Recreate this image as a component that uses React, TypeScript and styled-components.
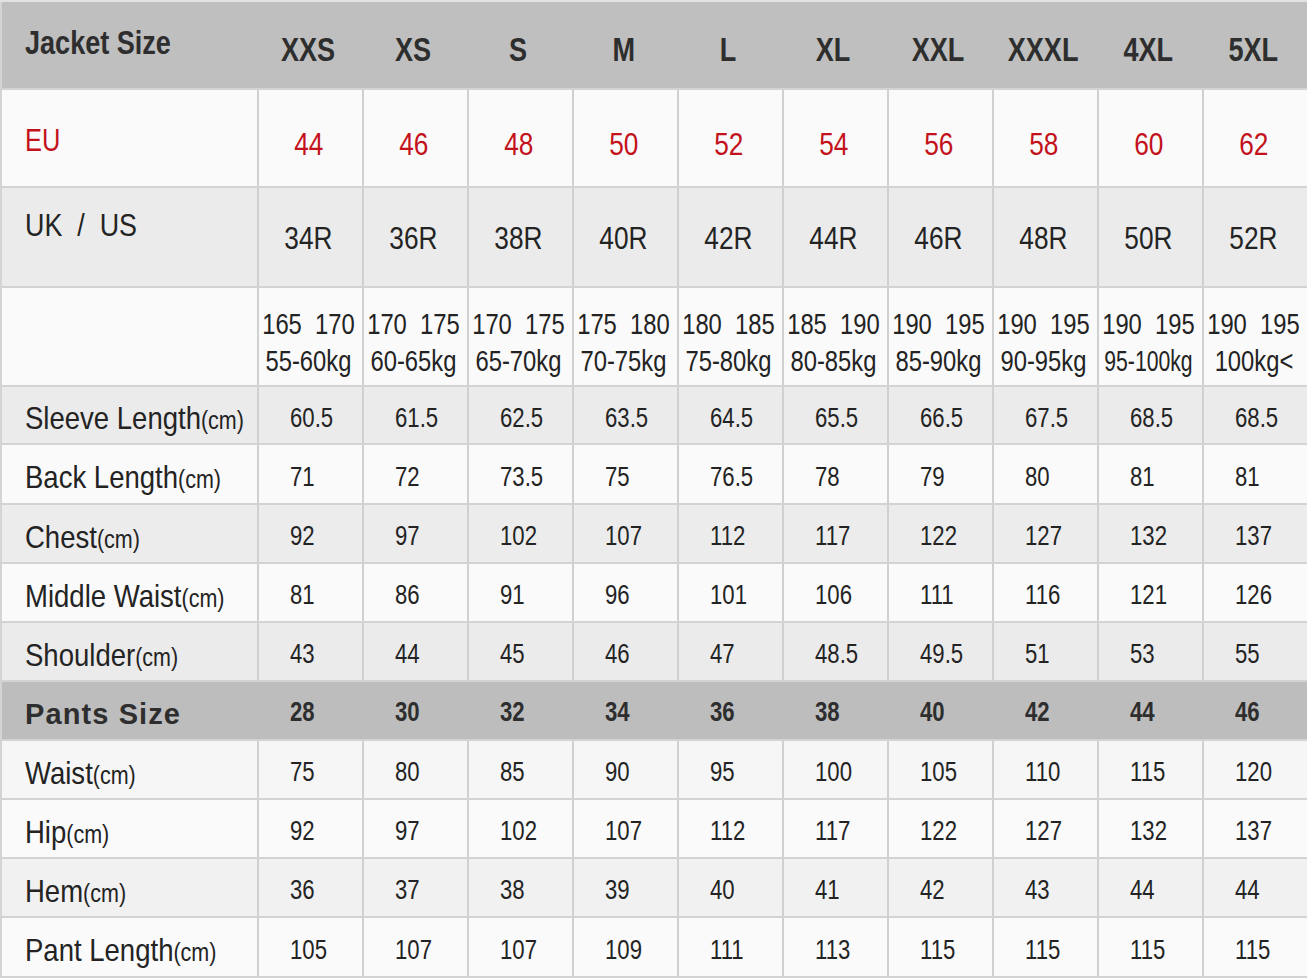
import React from "react";
import styled, { createGlobalStyle } from "styled-components";

const Global = createGlobalStyle`
  html, body { margin: 0; padding: 0; background: #fafafa; }
  body { font-family: "Liberation Sans", Arial, sans-serif; }
`;

const Table = styled.div`
  width: 1307px;
  display: flex;
  flex-direction: column;
  color: #232323;
  font-family: "Liberation Sans", Arial, sans-serif;
`;

const Row = styled.div<{ $h: number; $bg: string; $top?: boolean }>`
  display: grid;
  grid-template-columns: 257px repeat(10, 105px);
  height: ${(p) => p.$h}px;
  box-sizing: border-box;
  background: ${(p) => p.$bg};
  border-bottom: 2px solid #d3d3d3;
  ${(p) => (p.$top ? "border-top: 2px solid #e2e2e2;" : "")}
`;

const Cell = styled.div<{ $lined?: boolean; $center?: boolean; $pt?: number; $pb?: number }>`
  box-sizing: border-box;
  display: flex;
  align-items: center;
  justify-content: ${(p) => (p.$center ? "center" : "flex-start")};
  padding-left: ${(p) => (p.$center ? 0 : 31)}px;
  padding-right: ${(p) => (p.$center ? 4 : 0)}px;
  padding-top: ${(p) => p.$pt ?? 0}px;
  padding-bottom: ${(p) => p.$pb ?? 0}px;
  border-left: ${(p) => (p.$lined ? "2px solid #d0d0d0" : "2px solid transparent")};
  white-space: pre;
  line-height: 1;
  min-width: 0;
`;

const LabelCell = styled.div<{ $pt?: number; $pb?: number }>`
  box-sizing: border-box;
  display: flex;
  align-items: center;
  padding-left: 23px;
  padding-top: ${(p) => p.$pt ?? 0}px;
  padding-bottom: ${(p) => p.$pb ?? 0}px;
  border-left: 2px solid #d4d4d4;
  white-space: pre;
  line-height: 1;
`;

/* condensed rendering of the Arial-metric font (narrow face) */
const Narrow = styled.span<{ $origin?: string; $sx?: number }>`
  display: inline-block;
  white-space: pre;
  transform: scaleX(${(p) => p.$sx ?? 0.82});
  transform-origin: ${(p) => p.$origin ?? "center"};
`;

const HeadTitle = styled.span`
  font-weight: 700;
  font-size: 33px;
  color: #2e2e2e;
`;

const HeadSize = styled.span`
  font-weight: 700;
  font-size: 33px;
  color: #2e2e2e;
`;

const PantsTitle = styled.span`
  font-weight: 700;
  font-size: 29px;
  letter-spacing: 1.1px;
  color: #2e2e2e;
`;

const PantsSize = styled.span`
  font-weight: 700;
  font-size: 27px;
  color: #2e2e2e;
`;

const RedLabel = styled.span`
  font-size: 31px;
  color: #c3121c;
`;

const RedValue = styled.span`
  font-size: 32px;
  color: #c3121c;
`;

const BigText = styled.span`
  font-size: 32px;
`;

const Label = styled.span`
  font-size: 32px;
`;

const Unit = styled.span`
  font-size: 25px;
`;

const Value = styled.span`
  font-size: 27px;
`;

const Stack = styled.div`
  display: flex;
  flex-direction: column;
  align-items: center;
  font-size: 29px;
  line-height: 37px;
  white-space: pre;
`;

const sizes = ["XXS", "XS", "S", "M", "L", "XL", "XXL", "XXXL", "4XL", "5XL"];
const eu = [44, 46, 48, 50, 52, 54, 56, 58, 60, 62];
const uk = ["34R", "36R", "38R", "40R", "42R", "44R", "46R", "48R", "50R", "52R"];
const hw: [string, string][] = [
  ["165  170", "55-60kg"],
  ["170  175", "60-65kg"],
  ["170  175", "65-70kg"],
  ["175  180", "70-75kg"],
  ["180  185", "75-80kg"],
  ["185  190", "80-85kg"],
  ["190  195", "85-90kg"],
  ["190  195", "90-95kg"],
  ["190  195", "95-100kg"],
  ["190  195", "100kg<"],
];

type DataRow = { label: string; values: string[]; bg: string; h: number };

const jacketRows: DataRow[] = [
  { label: "Sleeve Length", values: ["60.5", "61.5", "62.5", "63.5", "64.5", "65.5", "66.5", "67.5", "68.5", "68.5"], bg: "#ebebeb", h: 58 },
  { label: "Back Length", values: ["71", "72", "73.5", "75", "76.5", "78", "79", "80", "81", "81"], bg: "#fafafa", h: 60 },
  { label: "Chest", values: ["92", "97", "102", "107", "112", "117", "122", "127", "132", "137"], bg: "#ececec", h: 59 },
  { label: "Middle Waist", values: ["81", "86", "91", "96", "101", "106", "111", "116", "121", "126"], bg: "#fafafa", h: 59 },
  { label: "Shoulder", values: ["43", "44", "45", "46", "47", "48.5", "49.5", "51", "53", "55"], bg: "#ebebeb", h: 59 },
];

const pantsSizes = ["28", "30", "32", "34", "36", "38", "40", "42", "44", "46"];

const pantsRows: DataRow[] = [
  { label: "Waist", values: ["75", "80", "85", "90", "95", "100", "105", "110", "115", "120"], bg: "#f6f6f6", h: 59 },
  { label: "Hip", values: ["92", "97", "102", "107", "112", "117", "122", "127", "132", "137"], bg: "#fafafa", h: 59 },
  { label: "Hem", values: ["36", "37", "38", "39", "40", "41", "42", "43", "44", "44"], bg: "#f1f1f1", h: 59 },
  { label: "Pant Length", values: ["105", "107", "107", "109", "111", "113", "115", "115", "115", "115"], bg: "#fafafa", h: 60 },
];

function MeasureRow({ row }: { row: DataRow }) {
  return (
    <Row $h={row.h} $bg={row.bg}>
      <LabelCell $pt={6}>
        <Narrow $origin="left" $sx={0.86}>
          <Label>{row.label}</Label>
          <Unit>(cm)</Unit>
        </Narrow>
      </LabelCell>
      {row.values.map((v, i) => (
        <Cell key={i} $lined $pt={6}>
          <Narrow $origin="left">
            <Value>{v}</Value>
          </Narrow>
        </Cell>
      ))}
    </Row>
  );
}

export default function App() {
  return (
    <>
      <Global />
      <Table>
        <Row $h={90} $bg="#bfbfbf" $top>
          <LabelCell $pb={6}>
            <Narrow $origin="left">
              <HeadTitle>Jacket Size</HeadTitle>
            </Narrow>
          </LabelCell>
          {sizes.map((s) => (
            <Cell key={s} $center $pt={8}>
              <Narrow>
                <HeadSize>{s}</HeadSize>
              </Narrow>
            </Cell>
          ))}
        </Row>
        <Row $h={98} $bg="#fafafa">
          <LabelCell $pt={4}>
            <Narrow $origin="left">
              <RedLabel>EU</RedLabel>
            </Narrow>
          </LabelCell>
          {eu.map((v) => (
            <Cell key={v} $lined $center $pt={12}>
              <Narrow>
                <RedValue>{v}</RedValue>
              </Narrow>
            </Cell>
          ))}
        </Row>
        <Row $h={100} $bg="#ebebeb">
          <LabelCell $pb={25}>
            <Narrow $origin="left" $sx={0.84}>
              <BigText>{"UK  /  US"}</BigText>
            </Narrow>
          </LabelCell>
          {uk.map((v) => (
            <Cell key={v} $lined $center $pt={2}>
              <Narrow>
                <BigText>{v}</BigText>
              </Narrow>
            </Cell>
          ))}
        </Row>
        <Row $h={99} $bg="#fafafa">
          <LabelCell />
          {hw.map(([h, w], i) => (
            <Cell key={i} $lined $center $pt={12}>
              <Stack>
                <Narrow>{h}</Narrow>
                <Narrow $sx={w.length > 7 ? 0.73 : 0.82}>{w}</Narrow>
              </Stack>
            </Cell>
          ))}
        </Row>
        {jacketRows.map((r) => (
          <MeasureRow key={r.label} row={r} />
        ))}
        <Row $h={59} $bg="#bdbdbd">
          <LabelCell $pt={8}>
            <PantsTitle>Pants Size</PantsTitle>
          </LabelCell>
          {pantsSizes.map((s) => (
            <Cell key={s} $pt={4}>
              <Narrow $origin="left">
                <PantsSize>{s}</PantsSize>
              </Narrow>
            </Cell>
          ))}
        </Row>
        {pantsRows.map((r) => (
          <MeasureRow key={r.label} row={r} />
        ))}
      </Table>
    </>
  );
}
